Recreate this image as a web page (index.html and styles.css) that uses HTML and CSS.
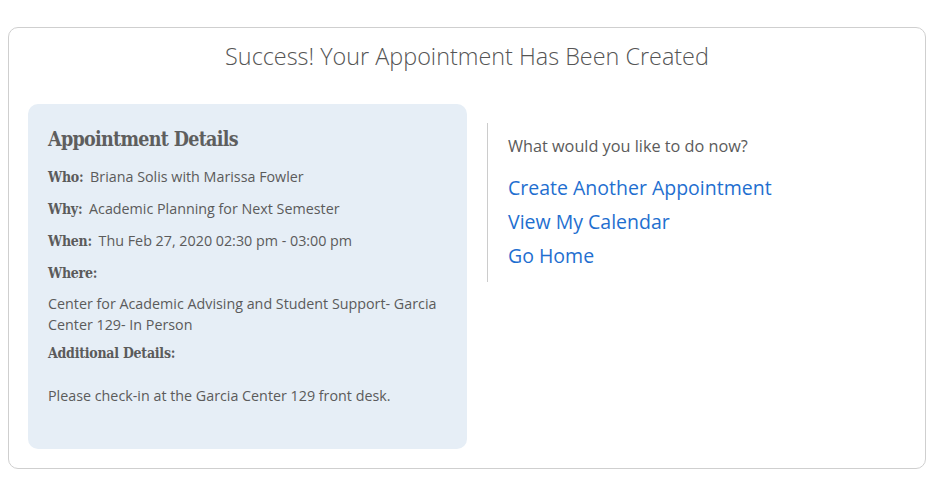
FILE: index.html
```html
<!DOCTYPE html>
<html>
<head>
<meta charset="utf-8">
<link rel="stylesheet" href="styles.css">
</head>
<body>
<div class="card">
  <h1 class="title">Success! Your Appointment Has Been Created</h1>
  <div class="cols">
    <div class="details">
      <h2 class="details-head">Appointment Details</h2>
      <div class="row"><span class="label">Who:</span> Briana Solis with Marissa Fowler</div>
      <div class="row"><span class="label">Why:</span> Academic Planning for Next Semester</div>
      <div class="row"><span class="label">When:</span> Thu Feb 27, 2020 02:30 pm - 03:00 pm</div>
      <div class="row row-tight"><span class="label">Where:</span></div>
      <p class="block">Center for Academic Advising and Student Support- Garcia Center 129- In Person</p>
      <div class="row"><span class="label">Additional Details:</span></div>
      <p class="block note">Please check-in at the Garcia Center 129 front desk.</p>
    </div>
    <div class="actions">
      <p class="question">What would you like to do now?</p>
      <a class="action" href="#">Create Another Appointment</a>
      <a class="action" href="#">View My Calendar</a>
      <a class="action" href="#">Go Home</a>
    </div>
  </div>
</div>
</body>
</html>
```
FILE: styles.css
```css
body {
  margin: 27px 8px 8px;
  font-family: "Open Sans", sans-serif;
  color: #5b5b5b;
  background: #fff;
}
.card {
  border: 1px solid #cfcfcf;
  border-radius: 10px;
  padding: 9px 19px 19px;
}
.title {
  margin: 0 0 29px;
  text-align: center;
  font-weight: 340;
  font-size: 23.4px;
  line-height: 38px;
  color: #555555;
}
.cols {
  display: flex;
}
.details {
  flex: 0 0 50%;
  box-sizing: border-box;
  background: #e6eef6;
  border-radius: 10px;
  padding: 22px 20px 20px;
  font-size: 14.3px;
  min-height: 345px;
}
.details-head {
  margin: 0 0 13px;
  font-family: "DejaVu Serif", serif;
  font-stretch: condensed;
  font-weight: 700;
  font-size: 19.5px;
  letter-spacing: -0.7px;
  line-height: 28px;
  color: #5e5e5e;
}
.row {
  line-height: 20px;
  margin-bottom: 12px;
}
.row-tight {
  margin-bottom: 10px;
}
.label {
  font-family: "DejaVu Serif", serif;
  font-stretch: condensed;
  font-weight: 700;
  font-size: 14px;
  letter-spacing: -0.25px;
  margin-right: 3px;
}
.block {
  margin: 0 0 8px;
  line-height: 21px;
}
.note {
  margin-top: 22px;
}
.actions {
  flex: 1;
  margin: 19px 0 0 20px;
  padding: 0 0 9px 20px;
  border-left: 1px solid #cccccc;
  align-self: flex-start;
  display: flex;
  flex-direction: column;
  align-items: flex-start;
}
.question {
  margin: 10px 0 12px;
  font-size: 16.25px;
  line-height: 26px;
}
.action {
  font-size: 19.5px;
  line-height: 34px;
  color: #1f6fd0;
  text-decoration: none;
}
```
